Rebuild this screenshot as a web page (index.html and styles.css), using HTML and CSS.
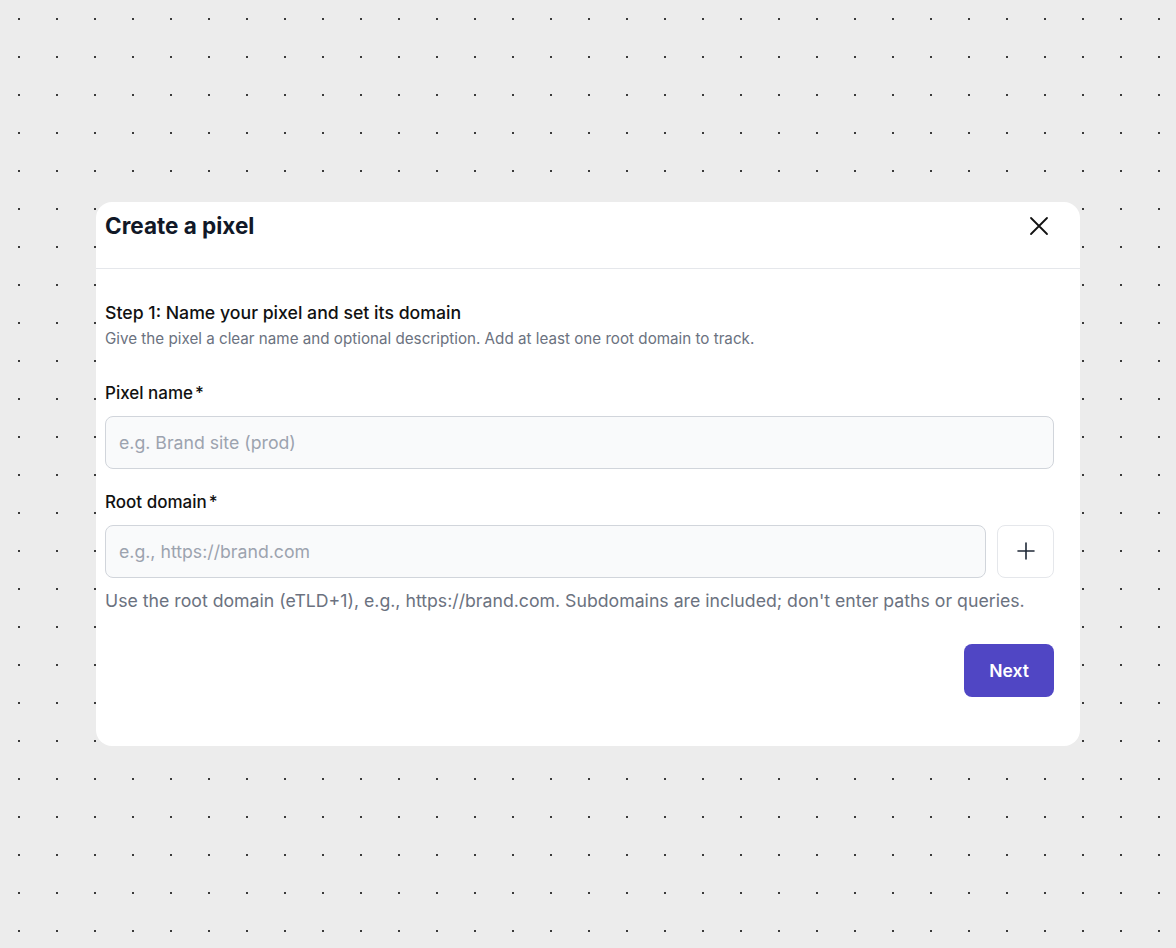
FILE: index.html
```html
<!DOCTYPE html>
<html lang="en">

<head>
    <meta charset="UTF-8">
    <meta name="viewport" content="width=device-width, initial-scale=1.0">
    <title>Create a pixel</title>
    <link rel="stylesheet" href="styles.css">
</head>

<body>
    <div class="dialog">
        <div class="dialog-header">
            <h1>Create a pixel</h1>
            <button class="close-btn" type="button" aria-label="Close">
                <svg width="20" height="20" viewBox="0 0 20 20" fill="none" stroke="#111" stroke-width="1.8" stroke-linecap="round">
                    <path d="M2 2 L18 18 M18 2 L2 18" />
                </svg>
            </button>
        </div>

        <form class="dialog-body">
            <h2>Step 1: Name your pixel and set its domain</h2>
            <p class="step-desc">Give the pixel a clear name and optional description. Add at least one root domain to track.</p>

            <label for="pixelName" class="first-label">Pixel name<span class="req">*</span></label>
            <input type="text" id="pixelName" name="pixelName" placeholder="e.g. Brand site (prod)">

            <label for="rootDomain">Root domain<span class="req">*</span></label>
            <div class="domain-row">
                <input type="text" id="rootDomain" name="rootDomain" placeholder="e.g., https://brand.com">
                <button class="add-btn" type="button" aria-label="Add domain">
                    <svg width="20" height="20" viewBox="0 0 20 20" fill="none" stroke="#1f2937" stroke-width="1.6" stroke-linecap="round">
                        <path d="M10 2 V18 M2 10 H18" />
                    </svg>
                </button>
            </div>
            <p class="hint">Use the root domain (eTLD+1), e.g., https://brand.com. Subdomains are included; don't enter paths or queries.</p>

            <div class="actions">
                <button class="next-btn" type="button">Next</button>
            </div>
        </form>
    </div>
</body>

</html>
```

FILE: styles.css
```css
html, body {
    margin: 0;
    padding: 0;
}

body {
    font-family: Inter, "Noto Sans", sans-serif;
    background-color: #ececec;
    background-image: radial-gradient(circle at 19px 19px, #3a3a3a 1.1px, transparent 1.5px);
    background-size: 38px 38px;
    min-height: 100vh;
    display: flex;
    align-items: center;
    justify-content: center;
}

.dialog {
    width: 984px;
    height: 544px;
    margin-bottom: 1px;
    background-color: #fff;
    border-radius: 16px;
    box-sizing: border-box;
}

.dialog-header {
    display: flex;
    align-items: flex-start;
    justify-content: space-between;
    height: 67px;
    box-sizing: border-box;
    padding: 10px 31px 0 9px;
    border-bottom: 1px solid #e5e7eb;
}

.dialog-header h1 {
    margin: 0;
    font-size: 22.5px;
    line-height: 28px;
    font-weight: 700;
    color: #111827;
}

.close-btn {
    background: none;
    border: none;
    padding: 0;
    margin-top: 4px;
    width: 20px;
    height: 20px;
    cursor: pointer;
}

.dialog-body {
    padding: 32px 26px 0 9px;
    margin: 0;
}

.dialog-body h2 {
    margin: 0;
    font-size: 17.7px;
    line-height: 24px;
    font-weight: 500;
    color: #111;
}

.step-desc {
    margin: 4px 0 0;
    font-size: 15.2px;
    line-height: 20px;
    color: #6b7280;
}

label {
    display: block;
    margin: 21px 0 11px;
    font-size: 17px;
    line-height: 24px;
    font-weight: 500;
    color: #111;
}

label.first-label {
    margin-top: 32px;
}

.req {
    margin-left: 2px;
}

input[type="text"] {
    display: block;
    width: 100%;
    height: 53px;
    padding: 0 13px;
    box-sizing: border-box;
    border: 1px solid #d1d5db;
    border-radius: 8px;
    background-color: #f9fafb;
    font-family: inherit;
    font-size: 17.7px;
    color: #111;
}

input::placeholder {
    color: #9ca3af;
}

.domain-row {
    display: flex;
    gap: 11px;
}

.domain-row input[type="text"] {
    flex: 1;
}

.add-btn {
    width: 57px;
    height: 53px;
    flex-shrink: 0;
    display: flex;
    align-items: center;
    justify-content: center;
    background: #fff;
    border: 1px solid #e5e7eb;
    border-radius: 8px;
    cursor: pointer;
}

.hint {
    margin: 11px 0 0;
    font-size: 17.7px;
    line-height: 24px;
    color: #6b7280;
}

.actions {
    display: flex;
    justify-content: flex-end;
    margin-top: 31px;
}

.next-btn {
    width: 90px;
    height: 53px;
    background-color: #5046c4;
    color: #fff;
    border: none;
    border-radius: 8px;
    font-family: inherit;
    font-size: 17.5px;
    font-weight: 600;
    cursor: pointer;
}
```
